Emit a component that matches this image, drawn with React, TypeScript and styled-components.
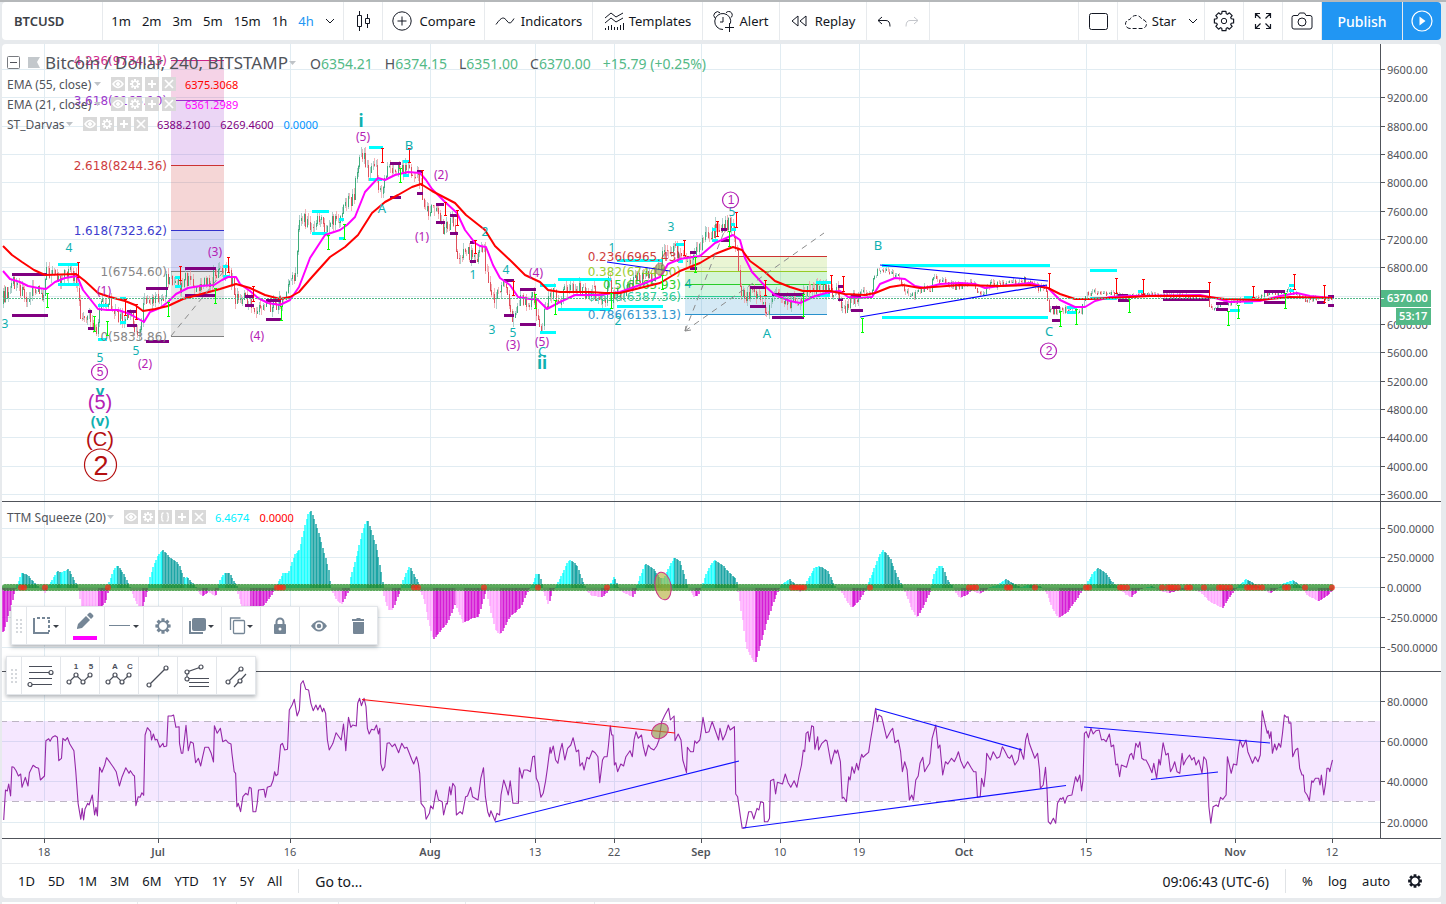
import React from "react";
import styled, { createGlobalStyle } from "styled-components";

type Pt = [number, number];

/* ---------- helpers ---------- */

// Parses "x,y x,y ..." into points.
const parse = (s: string): Pt[] =>
  s.trim().split(/\s+/).map((p) => p.split(",").map(Number) as Pt);

const toPoints = (pts: Pt[]) => pts.map((p) => p.join(",")).join(" ");

const sampler = (pts: Pt[]) => (x: number) => {
  let i = 1;
  while (i < pts.length - 1 && pts[i][0] < x) i++;
  const [x0, y0] = pts[i - 1];
  const [x1, y1] = pts[i];
  const t = Math.max(0, Math.min(1, (x - x0) / (x1 - x0)));
  return y0 + (y1 - y0) * t;
};

const noise = (n: number) => {
  const v = Math.sin(n * 12.9898 + 4.1414) * 43758.5453;
  return v - Math.floor(v);
};

const BAR = 1.463;

/* ---------- data ---------- */

const TIMES: [number, string][] = [
  [44, "18"], [158, "Jul"], [290, "16"], [430, "Aug"], [535, "13"], [614, "22"],
  [701, "Sep"], [780, "10"], [859, "19"], [964, "Oct"], [1086, "15"], [1235, "Nov"], [1332, "12"],
];

const PRICES: [number, string][] = Array.from({ length: 16 }, (_, i) => [
  Math.round(69 + i * 28.33),
  (9600 - i * 400).toFixed(2),
]);

const SQUEEZE_LEVELS: [number, string][] = [
  [528, "500.0000"], [557, "250.0000"], [587, "0.0000"], [617, "-250.0000"], [647, "-500.0000"],
];
const RSI_LEVELS: [number, string][] = [
  [701, "80.0000"], [741, "60.0000"], [781, "40.0000"], [822, "20.0000"],
];

const price = parse(`3,303 5,295 10,291 12,280 22,290 28,295 38,290 45,296 47,272 55,274 62,280 66,270 76,276 79,290 81,310 84,320
90,312 94,325 99,338 100,310 107,300 115,306 120,316 124,318 132,310 135,330 142,333 146,298 152,300 158,296 166,301 168,280
178,278 182,288 187,278 195,285 205,284 214,280 216,272 228,272 234,280 236,300 245,299 251,301 254,314 262,305 272,308 280,303
288,299 290,280 297,273 300,235 303,218 312,224 320,218 328,230 334,222 343,222 346,202 356,200 358,170 364,152 370,172 378,164
380,188 384,190 388,168 400,168 412,170 421,175 424,200 432,212 438,208 444,228 452,222 456,220 458,255 470,252 478,260 484,245
486,250 488,275 494,300 500,292 505,285 510,300 513,318 517,316 522,298 530,302 536,296 541,330 545,318 549,300 554,290 560,302
566,292 575,285 585,292 595,290 600,300 608,298 611,268 613,296 628,292 636,278 645,275 656,276 662,270 664,258 672,247 680,252
686,262 695,255 702,245 704,235 712,232 722,228 730,224 735,228 737,250 740,258 742,295 748,298 755,290 764,298 768,314 775,295
785,303 795,300 803,303 806,290 820,288 838,290 842,300 845,308 852,300 862,292 872,295 876,275 880,270 890,272 900,276 906,290
912,298 920,290 932,288 934,274 942,280 955,286 975,283 982,295 992,284 1005,284 1025,280 1040,287 1048,288 1050,310 1060,310
1075,309 1083,311 1086,295 1095,292 1115,293 1125,298 1140,294 1160,295 1200,297 1210,300 1213,308 1225,303 1240,301 1262,298
1265,293 1280,293 1290,290 1300,295 1308,300 1320,298 1332,299`);

const ema21 = parse(`3,271 10,279 20,282 28,286 38,288 46,289 55,282 65,278 77,276 83,290 98,309 107,310 118,310 130,314 135,317
144,322 150,312 160,308 168,302 176,294 188,288 200,286 214,285 222,280 228,277 236,277 240,284 250,291 258,298 268,303 280,305
290,300 299,287 310,258 325,235 340,230 347,225 355,217 365,192 378,178 385,180 395,175 408,172 420,173 426,180 432,189 444,201
457,213 465,230 475,243 480,246 486,247 493,265 500,278 510,285 518,297 530,299 537,299 547,309 560,302 575,295 600,295 620,292
640,285 660,277 668,264 680,259 700,256 715,243 733,235 740,240 745,258 752,272 765,286 775,295 790,301 800,303 815,296 830,292
840,291 848,297 860,298 872,297 880,284 895,278 905,279 915,286 925,288 940,284 960,283 975,284 985,288 1000,286 1030,283
1048,288 1060,300 1075,307 1085,307 1095,301 1110,297 1130,296 1200,295 1215,298 1230,302 1260,301 1280,296 1297,293 1310,296 1332,298`);

const ema55 = parse(`3,246 12,255 22,262 34,270 45,275 76,274 85,281 98,293 110,297 125,301 135,305 143,311 155,309 168,306 183,299
205,293 220,289 236,284 250,288 265,295 280,299 290,297 299,292 312,277 330,257 345,247 358,235 372,213 385,202 398,195 412,187
421,184 432,191 455,203 466,215 485,230 495,246 512,262 525,275 540,282 548,290 560,292 590,292 605,293 620,293 640,288 660,283
680,271 700,263 715,254 733,247 742,250 750,261 765,272 775,281 790,287 803,291 830,291 845,294 865,295 875,293 890,287 903,285
920,288 960,285 1000,286 1030,285 1048,288 1060,294 1075,299 1090,299 1110,298 1150,296 1200,296 1225,299 1260,300 1290,297 1332,298`);

const squeeze = parse(`2,-44 4,-43 15,-1 17,4 21,15 27,13 38,1 40,-1 45,-5 48,2 57,17.5 60,15 68,19 77,2 78,-3 81,-18 90,-25 98,-26
107,-10 108,4 113,18 117,23 124,13 129,2 132,-6 137,-17 142,-21 147,-3 149,8 153,22 158,34 163,38 168,32 178,24 184,10 187,11
195,1 198,-4 202,-8 208,-4 215,-9 217,-2 219,6 224,15.5 229,15 236,2 237,-4 241,-18 250,-22 262,-20 275,-1 277,4 283,15 288,15
294,33 299,38 304,60 308,75 311,77 320,49 328,20 331,-2 336,-12 342,-16 349,-2 350,10 357,35 363,59 367,69 376,41 382,10 384,-10
388,-22 392,-22 400,-2 403,8 409,22 418,5 420,-3 424,-12 428,-33 433,-52 440,-43 447,-35 455,-15 463,-35 472,-30 478,-29 486,-2
490,-22 495,-42 500,-47 510,-28 520,-20 528,-2 532,3 536,14 539,14 542,3 543,-3 548,-17 552,-3 557,4 562,14 567,26 570,28
577,22 584,3 587,-4 592,-8 602,-9 608,-3 610,4 614,12 619,-2 626,-6 633,-9 637,3 640,12 645,25 653,19 660,10 664,10 668,20
674,31 680,26 687,3 690,-4 694,-9 698,-7 702,3 706,15 712,26 715,28 722,23 730,14 736,9 738,-5 742,-30 746,-60 751,-70 755,-76
759,-61 766,-35 773,-14 780,2 784,6 789,9 796,2 799,-4 804,-1 807,8 814,20 819,22 827,17 835,1 841,-3 846,-13 851,-20 858,-14
865,-2 868,6 875,22 880,35 883,38 890,29 897,12 902,2 905,-5 911,-20 917,-30 924,-16 930,-3 933,12 938,22 942,22 947,8 952,2
955,-4 960,-10 966,-7 972,-2 976,-5 980,-6 990,1 998,3 1005,9 1012,5 1020,1 1028,3 1040,2 1046,-5 1052,-20 1058,-30 1066,-25
1074,-15 1082,-2 1086,4 1092,14 1097,20 1104,16 1111,7 1118,0 1126,-7 1131,-9 1140,-1 1152,2 1160,-3 1168,-5 1180,-2 1190,-1
1200,-4 1210,-14 1222,-20 1230,-8 1238,3 1246,9 1254,4 1265,-3 1270,-5 1276,-1 1284,5 1293,8 1302,0 1308,-8 1318,-13 1326,-8 1332,-3`);

const rsiSummer = parse(`8,480 12,390 16,393 19,372 23,408 26,320 30,322 35,332 40,348 45,342 48,382 55,352 61,378 64,338 72,316 78,322
84,325 88,360 97,348 100,242 106,236 109,244 114,232 120,227 125,232 128,302 134,295 137,235 142,242 147,233 152,252 161,272
165,335 170,430 176,478 179,445 182,480 185,447 191,430 194,435 201,405 206,465 209,442 212,468 217,322 222,337 228,315 232,293
240,308 247,322 253,335 260,378 266,350 274,323 281,340 284,332 290,345 293,348 296,437 301,410 305,412 309,398 313,406 316,225
321,203 328,215 330,240 334,222 338,240 342,238 348,262 355,250 357,260 363,258 366,168 373,168 378,165 383,202 390,200 391,250
395,280 398,280 405,196 410,272 415,245 421,250 426,308 432,295 437,318 441,292 446,262 454,262 460,280 465,306 467,197 473,220
480,205 485,245 492,240 497,248 503,252 505,280 510,335 513,340 516,440 519,430 524,455 529,410 535,400 540,405 543,382 547,385
551,455 557,455 560,430 563,390 575,388 578,412 582,382 590,378 595,360 598,335 601,347 605,343 608,300 611,255 615,250 620,270
626,268 630,150 636,135 641,118 647,168 652,150 655,72 660,62 666,88 672,90 677,130 682,152 688,135 692,150 697,135 702,155
705,145 709,160 713,240 717,270 723,255 725,250 732,218 738,230 743,240 748,192 751,238 753,272 756,215 759,172 764,202 768,195
776,198 779,130 783,115 787,137 793,115 797,140 800,205 804,222 809,208 815,210 820,195 824,222 827,205 829,310 833,332 838,320
843,250 848,248 854,260 860,252 868,278 875,250 881,265 886,262 892,282 897,300 901,312 907,290 911,310 914,340 917,430 921,437
925,445 928,478 935,460 938,437 943,447 950,390 955,420 963,425 966,465 972,430 974,432 979,380 982,405 986,370 991,380 994,465
1002,455 1007,462 1014,410 1018,408 1025,382 1029,410 1041,420 1047,355 1053,323 1057,410 1062,455 1066,470 1069,452 1078,482
1082,460 1088,465 1091,405 1097,360 1103,385 1107,405 1111,362 1117,430 1129,430 1131,323 1137,355 1141,330 1148,330 1155,335
1160,290 1164,288 1168,355 1173,370 1178,412 1183,400 1188,365 1192,325 1198,262 1200,280 1205,258 1210,300 1215,310 1220,272
1224,250 1230,300 1236,265 1243,255 1248,233 1255,275 1260,270 1263,318 1268,308 1272,330 1278,292 1283,297 1290,272 1296,278
1302,290 1306,368 1312,300 1316,290 1322,290 1325,258 1329,197 1332,225 1335,225 1338,315 1341,308 1345,335 1352,312 1358,318
1363,290 1372,272 1377,290 1381,238 1385,215 1390,235 1397,225 1401,260 1406,288 1412,255 1417,265 1424,270 1430,258 1435,240
1441,185 1448,165 1456,145 1460,180 1468,168 1470,242 1477,222 1483,240 1487,300 1495,338 1497,262 1504,275 1510,275 1513,242
1517,250 1524,240 1527,215 1531,172 1537,218 1544,215 1551,185 1556,205 1565,240`).map(
  ([u, v]) => [Math.round(u * 4.592) / 10, Math.round(6600 + v * 3.333) / 10] as Pt
);

const rsiAutumn = parse(`0,205 6,240 12,222 18,195 22,210 31,200 34,402 38,410 44,470 48,505 55,503 62,455 68,455 73,477 80,445 84,450
88,425 94,428 96,485 103,485 107,475 109,362 116,358 120,402 124,367 135,372 141,342 147,368 153,382 160,362 166,382 171,345
176,315 180,270 183,275 186,220 190,215 193,245 198,197 202,200 205,268 211,230 213,270 220,250 228,240 231,243 240,312 248,270
251,280 254,270 260,305 264,415 267,412 273,425 278,350 281,360 285,320 290,340 295,310 299,330 303,300 306,283 309,292 314,285
321,277 325,240 330,200 336,145 340,185 343,165 349,170 355,205 360,235 369,212 373,205 378,248 385,240 390,275 394,335 399,305
404,330 409,420 414,405 418,420 423,360 428,348 432,310 438,292 442,335 448,320 453,310 458,235 466,195 471,265 475,255 481,345
487,305 492,312 500,295 506,305 511,290 515,275 520,303 527,325 535,305 542,322 548,335 553,335 556,412 562,410 565,355 570,380
574,330 576,280 584,300 590,275 598,295 604,290 610,260 614,270 622,292 626,295 630,285 637,315 644,300 648,265 656,298 660,240
664,220 668,250 672,265 680,295 686,280 690,330 692,385 698,375 703,322 706,380 709,485 714,492 718,480 720,475 725,490 729,430
735,415 738,418 741,412 745,430 749,412 752,407 760,405 765,370 768,350 772,365 777,345 781,393 784,360 787,220 791,215 796,233
801,205 806,222 812,212 819,210 824,240 829,238 834,245 841,222 845,260 850,255 855,315 859,312 863,350 867,315 878,322 885,285
889,280 893,298 898,250 903,262 907,245 911,295 916,300 920,300 926,315 933,338 937,310 943,355 948,298 951,315 957,248 963,285
968,280 973,335 978,322 982,305 987,335 993,340 998,280 1001,315 1006,300 1014,285 1019,300 1024,292 1028,315 1034,300 1041,340
1045,290 1050,300 1053,330 1056,440 1060,490 1065,440 1072,435 1076,440 1081,412 1086,418 1093,405 1096,290 1104,340 1109,312
1116,315 1120,265 1123,240 1129,262 1136,240 1140,275 1150,310 1156,290 1162,305 1167,285 1171,152 1176,185 1182,220 1184,212
1187,235 1190,215 1193,280 1198,252 1202,270 1207,250 1211,262 1215,220 1219,165 1224,172 1227,170 1229,190 1233,188 1237,290
1243,270 1248,265 1252,325 1257,345 1260,345 1263,395 1268,405 1273,422 1278,362 1281,367 1286,355 1293,355 1296,375 1299,345
1304,405 1308,370 1311,325 1315,325 1317,335 1320,315 1323,300`).map(
  ([u, v]) => [Math.round(7200 + u * 4.63) / 10, Math.round(6600 + v * 3.333) / 10] as Pt
);

type Seg = [number, number, number];
const segs = (s: string): Seg[] =>
  s.trim().split(/\s+/).map((p) => p.split(",").map(Number) as Seg);

const purpleBoxes = segs(`12,47,274 12,48,315 88,92,311 88,94,328 127,136,311 127,137,325 146,168,288 146,169,341 185,216,268
185,216,295 245,254,296 245,254,305 266,281,300 266,281,319 390,401,163 390,401,197 417,423,171 417,423,193 436,444,204
436,445,222 450,457,215 450,458,233 470,476,242 470,476,261 504,514,280 504,514,315 520,536,289 520,536,324 690,696,252
690,697,268 721,727,229 721,729,240 750,766,287 750,766,306 772,804,294 772,804,317 838,843,286 838,843,299 851,861,296
851,863,310 1052,1060,307 1052,1060,320 1118,1128,295 1118,1129,300 1163,1209,291 1163,1209,299 1216,1228,303 1216,1228,309
1264,1285,291 1264,1285,302 1317,1325,302 1328,1334,296 1328,1334,305`);

const cyanBoxes = segs(`58,78,264 58,79,284 98,108,305 98,107,339 120,126,298 120,126,322 175,181,277 175,181,286 223,228,266
223,230,276 312,329,211 312,327,233 339,344,219 339,344,238 369,383,147 369,382,179 403,409,161 403,409,175 540,556,285
540,556,332 558,611,279 558,611,309 617,662,260 617,663,306 676,684,244 678,683,261 712,716,229 712,718,240 731,735,224
731,736,229 816,831,282 820,830,295 882,1050,265 882,1048,317 1067,1077,307 1067,1076,312 1090,1117,270 1090,1117,298
1138,1143,291 1230,1240,310 1244,1253,297 1244,1253,302 1289,1294,285 1289,1294,290`);

const sellTicks = segs(`78,262,278 125,299,316 136,304,320 180,266,281 228,257,273 253,286,302 382,148,163 409,148,163 422,170,186
445,202,216 457,210,226 475,240,254 513,281,296 684,240,256 717,221,237 736,212,228 765,280,296 831,275,292 843,276,292
1049,273,289 1116,278,294 1143,279,295 1209,282,297 1253,286,298 1294,274,290 1324,285,303`);

const buyTicks = segs(`47,293,308 94,316,332 107,321,336 168,302,317 215,288,304 281,306,321 328,235,250 344,224,240 400,168,183
535,294,309 555,300,315 611,293,309 662,275,290 695,257,273 729,231,247 803,294,317 862,318,333 1060,311,327 1076,309,325
1129,299,313 1228,311,326 1238,305,319 1285,293,309`);

const sticks = (list: Seg[]) =>
  list.map(([x, a, b]) => `M${x + 0.5} ${a}V${b}M${x - 1} ${a + 0.5}h3M${x - 1} ${b - 0.5}h3`).join("");
const bars = (list: Seg[]) => list.map(([a, b, y]) => `M${a} ${y + 0.5}H${b}`).join("");

type Mark = [number, number, string, string, number?, boolean?];
const TEAL = "#0fb0b0";
const PLUM = "#b420b4";
const marks: Mark[] = [
  [5, 328, "3", TEAL], [69, 252, "4", TEAL], [104, 295, "(1)", PLUM], [100, 362, "5", TEAL],
  [136, 355, "5", TEAL], [145, 368, "(2)", PLUM], [215, 256, "(3)", PLUM], [257, 340, "(4)", PLUM],
  [361, 127, "i", TEAL, 17, true], [363, 141, "(5)", PLUM], [382, 213, "A", TEAL], [409, 150, "B", TEAL],
  [441, 179, "(2)", PLUM], [422, 241, "(1)", PLUM], [485, 236, "2", TEAL], [473, 279, "1", TEAL],
  [506, 274, "4", TEAL], [536, 277, "(4)", PLUM], [492, 334, "3", TEAL], [513, 337, "5", TEAL],
  [513, 349, "(3)", PLUM], [542, 346, "(5)", PLUM], [542, 356, "C", TEAL], [542, 369, "ii", TEAL, 17, true],
  [612, 252, "1", TEAL], [618, 325, "2", TEAL], [671, 231, "3", TEAL], [688, 288, "4", TEAL],
  [732, 216, "5", TEAL], [767, 338, "A", TEAL], [878, 250, "B", TEAL], [1049, 336, "C", TEAL],
  [100, 396, "v", TEAL, 15, true], [100, 409, "(5)", PLUM, 20], [100, 426, "(v)", TEAL, 15, true],
  [100, 446, "(C)", "#b41010", 20],
];

const circled: [number, number, string, string, number, number][] = [
  [99, 372, "5", PLUM, 8, 12], [730, 200, "1", PLUM, 8, 12],
  [1048, 351, "2", PLUM, 8, 12], [100, 465, "2", "#b41010", 16, 27],
];

const leftFib: [number, string, string, string][] = [
  [60, "4.236(9734.13)", "#cc2288", "#cc2288"], [100, "3.618(9165.10)", "#9930cc", "#9930cc"],
  [165, "2.618(8244.36)", "#cc3333", "#cc3333"], [230, "1.618(7323.62)", "#3333cc", "#3333cc"],
  [271, "1(6754.60)", "#808080", "#808080"], [336, "0(5833.86)", "#808080", "none"],
];
const rightFib: [number, string, string, string][] = [
  [256, "0.236(6965.43)", "#cc3333", "#95cc28"], [271, "0.382(6744.60)", "#95cc28", "#28cc28"],
  [284, "0.5(6565.93)", "#28cc28", "#28cc70"], [296, "0.618(6387.36)", "#28cc95", "#2890cc"],
  [314, "0.786(6133.13)", "#2890cc", "none"],
];

/* ---------- derived shapes ---------- */

const candles = (() => {
  const at = sampler(price);
  const out = { upWick: "", downWick: "", up: "", down: "" };
  let open = at(3);
  for (let i = 0; 3 + i * BAR < 1333; i++) {
    const x = 3 + i * BAR;
    const amp = x > 1090 ? 4 : x > 860 ? 6 : 13;
    const close = at(x + BAR) + (noise(i) - 0.5) * amp;
    const hi = Math.min(open, close) - noise(i + 2000) * amp * 0.5;
    const lo = Math.max(open, close) + noise(i + 4000) * amp * 0.5;
    const px = Math.floor(x) + 0.5;
    const top = Math.min(open, close).toFixed(0);
    const bottom = (Math.max(open, close) + 1).toFixed(0);
    const k = close < open ? "up" : "down";
    out[`${k}Wick` as "upWick" | "downWick"] += `M${px} ${hi.toFixed(0)}V${lo.toFixed(0)}`;
    if (i % 2 === 0 || Math.abs(open - close) > 5) out[k] += `M${px} ${top}V${bottom}`;
    open = close;
  }
  return out;
})();

const histogram = (() => {
  const at = sampler(squeeze);
  const out: { x: number; h: number; fill: string }[] = [];
  for (let i = 0; 2 + i * BAR < 1333; i++) {
    const x = 2 + i * BAR;
    const h = at(x);
    const growing = Math.abs(at(x + 0.7)) >= Math.abs(at(x - 0.7)) - 0.1;
    const fill = h > 0 ? (growing ? "#00ffff" : "#009a9a") : growing ? "#ff9cff" : "#d000d0";
    out.push({ x: Math.floor(x), h: Math.round(h), fill });
  }
  return out;
})();

const redDots = [21, 24, 45, 108, 277, 280, 283, 414, 418, 484, 538, 607, 792, 795, 798, 801, 804, 870, 969, 973, 976,
  1007, 1010, 1035, 1086, 1089, 1120, 1123, 1127, 1162, 1168, 1171, 1174, 1178, 1187, 1190, 1204, 1219, 1222, 1226, 1230,
  1247, 1250, 1254, 1258, 1262, 1285, 1288, 1305, 1332];

/* ---------- styled parts ---------- */

const UI = `"Noto Sans", "Open Sans", sans-serif`;

const Global = createGlobalStyle`
  *, *::before, *::after { box-sizing: border-box; }
  body { margin: 0; background: #e7eaed; font-family: ${UI}; color: #131722; overflow: hidden; }
  button { font: inherit; color: inherit; background: none; border: 0; padding: 0; cursor: pointer; }
  svg { display: block; }
`;

const Page = styled.div`
  display: flex;
  flex-direction: column;
  gap: 4px;
  padding: 0 5px 0 2px;
  border-top: 2px solid #b5b8ba;
`;

const Toolbar = styled.header`
  display: flex;
  height: 38px;
  background: #e7eaed;
  gap: 1px;
  border-radius: 4px;
  overflow: hidden;
  font-size: 13px;
`;

const Cell = styled.div<{ $w: number; $gap?: number }>`
  width: ${(p) => p.$w}px;
  flex: none;
  display: flex;
  align-items: center;
  justify-content: center;
  gap: ${(p) => p.$gap ?? 0}px;
  background: #fff;
`;

const ToolButton = styled.button<{ $w: number; $gap?: number; $primary?: boolean }>`
  width: ${(p) => p.$w}px;
  flex: none;
  display: flex;
  align-items: center;
  justify-content: center;
  gap: ${(p) => p.$gap ?? 8}px;
  white-space: nowrap;
  background: ${(p) => (p.$primary ? "#2196f3" : "#fff")};
  color: ${(p) => (p.$primary ? "#fff" : "#131722")};
  font-size: ${(p) => (p.$primary ? 14 : 13)}px;
  font-weight: ${(p) => (p.$primary ? 500 : 400)};
`;

const LayoutName = styled.span`
  margin-right: 8px;
`;

const Symbol = styled.button`
  width: 100px;
  flex: none;
  padding-left: 12px;
  background: #fff;
  text-align: left;
  font-size: 13px;
  font-weight: 600;
  color: #3c4046;
`;

const Interval = styled.button<{ $active?: boolean }>`
  color: ${(p) => (p.$active ? "#2196f3" : "#131722")};
`;

const Spacer = styled.div`
  flex: 1;
  background: #fff;
`;

const ChartCard = styled.main`
  position: relative;
  background: #fff;
  border-radius: 4px;
`;

const Pane = styled.section<{ $h: number }>`
  display: flex;
  height: ${(p) => p.$h}px;
  border-bottom: 1px solid #50535a;
`;

const Plot = styled.svg`
  flex: 1;
  min-width: 0;
  height: 100%;
  overflow: hidden;
`;

const Scale = styled.svg`
  width: 61px;
  flex: none;
  height: 100%;
  border-left: 1px solid #50535a;
  font: 11px ${UI};
  fill: #50535a;
`;

const TimeAxis = styled.svg`
  width: 100%;
  height: 24px;
  font: 11px ${UI};
  fill: #50535a;
`;

const BottomBar = styled.footer`
  display: flex;
  align-items: center;
  height: 35px;
  padding: 0 16px;
  border-top: 1px solid #e7eaed;
  font-size: 13px;
`;

const Ranges = styled.nav`
  display: flex;
  gap: 13px;
  padding-right: 16px;
`;

const BarGroup = styled.div`
  display: flex;
  align-items: center;
  gap: 15px;
  height: 24px;
  padding: 0 0 0 16px;
  border-left: 1px solid #e0e3e6;
`;

const GoTo = styled.button`
  font-size: 14px;
`;

const Clock = styled.button`
  margin-left: auto;
  margin-right: 16px;
  font-size: 14px;
`;

const TabStrip = styled.div`
  display: flex;
  gap: 1px;
  height: 2px;
`;

const TabStub = styled.div<{ $w?: number }>`
  background: #fff;
  ${(p) => (p.$w ? `width: ${p.$w}px; flex: none;` : "flex: 1;")}
`;

const Legend = styled.div<{ $top: number }>`
  position: absolute;
  left: 5px;
  top: ${(p) => p.$top}px;
  display: flex;
  flex-direction: column;
  font-size: 12px;
  color: #50535a;
`;

const LegendTitle = styled.div`
  display: flex;
  align-items: center;
  height: 22px;
  margin-top: 4px;
  white-space: nowrap;
`;

const TitleText = styled.h1`
  margin: 0 4px 0 3px;
  width: 240px;
  font-size: 17px;
  line-height: 22px;
  font-weight: 400;
`;

const Ohlc = styled.dl`
  display: flex;
  gap: 12px;
  margin: 0 0 0 14px;
  font-size: 14px;
  div { display: flex; }
  dd { margin: 0; color: #53b987; }
`;

const LegendRow = styled.div`
  display: flex;
  align-items: center;
  height: 20px;
  white-space: nowrap;
`;

const RowName = styled.span<{ $w: number }>`
  width: ${(p) => p.$w}px;
`;

const MiniButtons = styled.div`
  display: flex;
  gap: 3px;
  margin: 0 9px 0 10px;
`;

const MiniButton = styled.button`
  width: 14px;
  height: 14px;
  background: #d9d9d9;
`;

const Value = styled.span<{ $c: string }>`
  margin-right: 10px;
  font-size: 11px;
  color: ${(p) => p.$c};
`;

const FloatBar = styled.div<{ $x: number; $y: number }>`
  position: absolute;
  left: ${(p) => p.$x}px;
  top: ${(p) => p.$y}px;
  display: flex;
  height: 39px;
  background: #fff;
  border: 1px solid #e3e6ea;
  box-shadow: 0 2px 4px rgba(60, 70, 80, 0.4);
`;

const Grip = styled.div`
  width: 14px;
  display: flex;
  align-items: center;
  justify-content: center;
`;

const FloatButton = styled.button`
  width: 39px;
  display: flex;
  align-items: center;
  justify-content: center;
  border-left: 1px solid #e3e6ea;
`;

/* ---------- small drawings ---------- */

const Ico = ({ w = 28, h = 28, children }: { w?: number; h?: number; children: React.ReactNode }) => (
  <svg width={w} height={h} viewBox={`0 0 ${w} ${h}`} fill="none" stroke="currentColor" aria-hidden="true">
    {children}
  </svg>
);

const Chevron = () => (
  <Ico w={10} h={6}><path d="M1 1l4 4 4-4" /></Ico>
);
const Caret = () => (
  <svg width="7" height="4" aria-hidden="true"><path d="M0 0h7L3.500 4z" fill="#bfc3c7" /></svg>
);

const gearPath = (cx: number, cy: number, r1: number, r2: number) => {
  let d = "";
  for (let i = 0; i < 8; i++) {
    [[-0.3, r1], [-0.2, r2], [0.2, r2], [0.3, r1]].forEach(([o, r], j) => {
      const a = (i * Math.PI) / 4 + o;
      d += `${i + j === 0 ? "M" : "L"}${(cx + Math.sin(a) * r).toFixed(2)} ${(cy - Math.cos(a) * r).toFixed(2)}`;
    });
  }
  return d + "Z";
};

const miniGlyphs: Record<string, React.ReactNode> = {
  Hide: (
    <g fill="none" stroke="#fff"><path d="M2 7q5-7 10 0q-5 7-10 0z" strokeWidth="1.500" /><circle cx="7" cy="7" r="1.500" fill="#fff" /></g>
  ),
  Settings: <path d={gearPath(7, 7, 3.5, 5.2) + "M7 5a2 2 0 1 0 .01 0z"} fill="#fff" fillRule="evenodd" />,
  Source: <path d="M5.500 3q-2 0-1.500 2.500q0 1.500-1 1.500q1 0 1 1.500q-.5 2.500 1.500 2.500M8.500 3q2 0 1.500 2.500q0 1.500 1 1.500q-1 0-1 1.500q.5 2.500-1.500 2.500" fill="none" stroke="#fff" strokeWidth="1.300" />,
  Add: <path d="M7 3v8M3 7h8" stroke="#fff" strokeWidth="2" />,
  Remove: <path d="M3 3l8 8M11 3l-8 8" stroke="#fff" strokeWidth="1.700" />,
};

const Minis = ({ source }: { source?: boolean }) => (
  <MiniButtons>
    {["Hide", "Settings", ...(source ? ["Source"] : []), "Add", "Remove"].map((n) => (
      <MiniButton key={n} aria-label={n}>
        <svg width="14" height="14" aria-hidden="true">{miniGlyphs[n]}</svg>
      </MiniButton>
    ))}
  </MiniButtons>
);

const GripDots = () => (
  <svg width="6" height="14" fill="#d5d8dc" aria-hidden="true">
    {[0, 4, 8, 12].map((y) => (
      <g key={y}><rect y={y} width="2" height="2" /><rect x="4" y={y} width="2" height="2" /></g>
    ))}
  </svg>
);

const Drop = ({ x = 25, y = 14 }) => <path d={`M${x} ${y - 1}h6l-3 3z`} fill="#3a3f47" stroke="none" />;

const SLATE = "#758696";
const editTools: [string, React.ReactNode][] = [
  ["Border", <g><path d="M4 6v15h15" stroke={SLATE} strokeWidth="2" /><path d="M7 6h13M19 8v12" stroke={SLATE} strokeWidth="2" strokeDasharray="3 2" /><Drop x={23} /></g>],
  ["Line colour", <g stroke="none"><path d="M8 16l1-4 8-8 4 4-8 8-5 1z" fill={SLATE} /><path d="M18 3l2-2q1-1 2 0l2 2q1 1 0 2l-2 2z" fill={SLATE} /><rect x="4" y="24" width="24" height="4" fill="#ff00ff" /></g>],
  ["Line style", <g><path d="M1 13.500h21" stroke={SLATE} /><Drop /></g>],
  ["Settings", <path d={gearPath(16, 14, 5.6, 7.8) + "M16 10a4 4 0 1 0 .01 0z"} fill={SLATE} fillRule="evenodd" stroke="none" />],
  ["Visual order", <g><path d="M4 9v12H17" stroke={SLATE} strokeWidth="2" /><rect x="6" y="6" width="14" height="13" rx="2" fill={SLATE} stroke="none" /><Drop x={22} /></g>],
  ["Clone", <g><path d="M5.500 18v-12h10" stroke={SLATE} strokeWidth="1.300" /><rect x="8.500" y="8.500" width="11" height="13" rx="1" stroke={SLATE} strokeWidth="1.300" /><Drop x={22} /></g>],
  ["Lock", <g><path d="M12.500 13v-3a3.500 3.500 0 0 1 7 0v3" stroke={SLATE} strokeWidth="2" /><rect x="10" y="12" width="12" height="10" rx="1" fill={SLATE} stroke="none" /><circle cx="16" cy="17" r="1.500" fill="#fff" stroke="none" /></g>],
  ["Visibility", <g><path d="M8 14q8-11 16 0q-8 11-16 0z" fill={SLATE} stroke="none" /><circle cx="16" cy="14" r="3" stroke="#fff" strokeWidth="1.500" /></g>],
  ["Delete", <g fill={SLATE} stroke="none"><path d="M10 7h4l1-1h3l1 1h3v2H10zM11 10h11v11q0 1-1 1h-9q-1 0-1-1z" /></g>],
];

const INK = "#4a4e59";
const Nodes = ({ at }: { at: Pt[] }) => (
  <>{at.map(([x, y]) => <circle key={`${x}-${y}`} cx={x} cy={y} r="2" fill="#fff" />)}</>
);
const Wave = ({ a, b }: { a: string; b: string }) => (
  <g stroke={INK} strokeWidth="1.200">
    <path d="M5 20l7-7 7 7 7-7" /><Nodes at={[[5, 20], [12, 13], [19, 20], [26, 13]]} />
    <g fill={INK} stroke="none" fontSize="8" fontWeight="700" fontFamily="Liberation Sans, sans-serif" textAnchor="middle">
      <text x="12" y="7">{a}</text><text x="27" y="7">{b}</text>
    </g>
  </g>
);
const drawTools: [string, React.ReactNode][] = [
  ["Fib retracement", <g stroke={INK} strokeWidth="1.200"><path d="M4 4.500h23M4 10.500h23M4 16.500h23M4 22.500h23" /><Nodes at={[[26, 10.5], [5, 22.5]]} /></g>],
  ["Elliott impulse", <Wave a="1" b="5" />],
  ["Elliott correction", <Wave a="A" b="C" />],
  ["Trend line", <g stroke={INK} strokeWidth="1.200"><path d="M7 23L24 6" /><Nodes at={[[7, 23], [24, 6]]} /></g>],
  ["Fib extension", <g stroke={INK} strokeWidth="1.200"><path d="M6 17v-7L20 5M6 16.500h22M8 20.500h20M8 24.500h20" /><Nodes at={[[6, 17], [6, 10], [20, 5]]} /></g>],
  ["Parallel channel", <g stroke={INK} strokeWidth="1.200"><path d="M8 20L21 7M14 25l12-13" /><Nodes at={[[8, 20], [21, 7], [20, 19]]} /></g>],
];

/* ---------- chart panes ---------- */

const Grid = ({ rows, bottom }: { rows: [number, string][]; bottom: number }) => (
  <g stroke="#e1ecf2" shapeRendering="crispEdges">
    {rows.map(([y]) => <path key={y} d={`M0 ${y + 0.5}H4000`} />)}
    {TIMES.map(([x]) => <path key={x} d={`M${x + 0.5} 0V${bottom}`} />)}
  </g>
);

const ScaleLabels = ({ rows, top }: { rows: [number, string][]; top: number }) => (
  <g transform={`translate(0 ${-top})`}>
    {rows.map(([y, t]) => (
      <g key={t}>
        <path d={`M0 ${y + 0.5}h4`} stroke="#50535a" />
        <text x="6" y={y + 5}>{t}</text>
      </g>
    ))}
  </g>
);

const FibZone = ({ rows, x1, x2 }: { rows: [number, string, string, string][]; x1: number; x2: number }) => (
  <g>
    {rows.map(([y, , line, fill], i) => (
      <g key={y}>
        {fill !== "none" && <rect x={x1} y={y} width={x2 - x1} height={rows[i + 1][0] - y} fill={fill} opacity="0.2" />}
        <path d={`M${x1} ${y + 0.5}H${x2}`} stroke={line} />
      </g>
    ))}
  </g>
);

const FibText = ({ rows, x }: { rows: [number, string, string, string][]; x: number }) => (
  <g fontFamily="DejaVu Sans, sans-serif" fontSize="12" textAnchor="end" opacity="0.95">
    {rows.map(([y, t, c]) => <text key={t} x={x} y={y + 5} fill={c}>{t}</text>)}
  </g>
);

const PricePane = () => (
  <Plot role="img" aria-label="Bitcoin price">
    <g transform="translate(-2 -44)">
      <Grid rows={PRICES} bottom={501} />
      <FibZone rows={leftFib} x1={171} x2={224} />
      <FibZone rows={rightFib} x1={685} x2={827} />
      <g fill="none" shapeRendering="crispEdges">
        <path d={candles.upWick} stroke="#9cc4c0" opacity="0.8" />
        <path d={candles.downWick} stroke="#f2a0a8" opacity="0.8" />
        <path d={candles.up} stroke="#3fae7c" />
        <path d={candles.down} stroke="#e0505c" />
      </g>
      <path d={bars(purpleBoxes)} stroke="#800080" strokeWidth="3" />
      <path d={bars(cyanBoxes)} stroke="#00ffff" strokeWidth="3" />
      <FibText rows={leftFib} x={167} />
      <FibText rows={rightFib} x={681} />
      <g fill="none" strokeLinejoin="round">
        <polyline points={toPoints(ema21)} stroke="#ff00ff" strokeWidth="2" />
        <polyline points={toPoints(ema55)} stroke="#ff0000" strokeWidth="2" />
      </g>
      <path d={sticks(sellTicks)} stroke="#ff0000" />
      <path d={sticks(buyTicks)} stroke="#00ff00" />
      <g stroke="#8c8c8c" strokeDasharray="6 5">
        <path d="M171 336L224 271M685 331L824 233M685 331L724 232" />
      </g>
      <path d="M685 331l1-5M685 331l6-1" stroke="#8c8c8c" />
      <path d="M0 298.500H4000" stroke="#53b987" strokeDasharray="2 1" />
      <path d="M607 262L670 271M880 265L1048 281M860 317L1047 285" stroke="#0000ff" strokeWidth="1.200" />
      <ellipse cx="660" cy="269" rx="5" ry="6" fill="#909a40" fillOpacity="0.6" stroke="#c04080" strokeOpacity="0.6" />
      <g textAnchor="middle" fontFamily="Noto Sans, Liberation Sans, sans-serif">
        {marks.map(([x, y, t, c, size = 12, bold], i) => (
          <text key={i} x={x} y={y} fill={c} fontSize={size === 12 && /^[A-C]$/.test(t) ? 13 : size} fontWeight={bold ? 700 : 400}
            fontFamily={size > 12 && !bold ? "Liberation Sans, sans-serif" : undefined}>{t}</text>
        ))}
        {circled.map(([x, y, t, c, r, size]) => (
          <g key={`${x}-${y}`}>
            <circle cx={x + 0.5} cy={y} r={r} fill="none" stroke={c} strokeWidth="1.200" />
            <text x={x + 1} y={y + Math.round(size * 0.36)} fill={c} fontSize={size} fontFamily="Liberation Sans, sans-serif">{t}</text>
          </g>
        ))}
      </g>
    </g>
  </Plot>
);

const SqueezePane = () => (
  <Plot role="img" aria-label="TTM Squeeze">
    <g transform="translate(-2 -502)">
      <Grid rows={SQUEEZE_LEVELS} bottom={671} />
      {histogram.map(({ x, h, fill }) => (
        <rect key={x} x={x} y={h > 0 ? 588 - h : 588} width="2" height={Math.abs(h)} fill={fill} opacity="0.66" />
      ))}
      <rect x="2" y="584" width="1332" height="7" rx="3" fill="#228b22" opacity="0.74" />
      <path d="M3 584.500H1332M3 590.500H1332" stroke="#fff" strokeDasharray="1 2" opacity="0.3" />
      {redDots.map((x) => <circle key={x} cx={x} cy="587.500" r="3" fill="#ff2a1a" opacity="0.7" />)}
      <ellipse cx="663" cy="586" rx="8" ry="14" transform="rotate(-10 663 586)" fill="#b0aa30" fillOpacity="0.6" stroke="#cc3388" />
    </g>
  </Plot>
);

const RsiPane = () => (
  <Plot role="img" aria-label="Relative strength index">
    <g transform="translate(-2 -672)">
      <Grid rows={RSI_LEVELS} bottom={838} />
      <rect x="0" y="721" width="4000" height="80" fill="#9915ff" opacity="0.1" />
      <path d="M0 721.500H4000M0 801.500H4000" stroke="#bdb5c4" strokeDasharray="7 5" />
      <polyline points={toPoints([...rsiSummer, ...rsiAutumn])} fill="none" stroke="#9528a8" strokeWidth="1.100" strokeLinejoin="round" />
      <path d="M362 699.500L675 733" stroke="#ff1010" strokeWidth="1.200" />
      <path d="M495 822L739 761M743 828L1066 785.500M876 709L1022 750M1084 727L1270 743M1151 779.500L1218 772" stroke="#1010ff" strokeWidth="1.200" />
      <ellipse cx="660" cy="731" rx="9" ry="7" transform="rotate(-35 660 731)" fill="#909a40" fillOpacity="0.6" stroke="#cc3388" />
    </g>
  </Plot>
);

/* ---------- page ---------- */

export default function App() {
  return (
    <>
      <Global />
      <Page>
        <Toolbar>
          <Symbol>BTCUSD</Symbol>
          <Cell $w={240} $gap={11}>
            {["1m", "2m", "3m", "5m", "15m", "1h", "4h"].map((t) => (
              <Interval key={t} $active={t === "4h"}>{t}</Interval>
            ))}
            <Interval aria-label="More intervals"><Chevron /></Interval>
          </Cell>
          <ToolButton $w={38} aria-label="Candles">
            <Ico w={16} h={20}><path d="M4.500 0v4M4.500 16v4M2.500 4.500h4v11h-4zM12.500 3v4M12.500 13v4M10.500 7.500h4v5h-4z" /></Ico>
          </ToolButton>
          <ToolButton $w={101}>
            <Ico w={20} h={20}><circle cx="10" cy="10" r="9.200" /><path d="M10 5.500v9M5.500 10h9" /></Ico>Compare
          </ToolButton>
          <ToolButton $w={107} $gap={6}>
            <Ico w={20} h={12}><path d="M1 9.500C7 1 9 2 12 6q3 5 7-2.500" /></Ico>Indicators
          </ToolButton>
          <ToolButton $w={109} $gap={5}>
            <Ico w={20} h={18}>
              <path d="M1 6l6-5 5 4 7-4M1 11l6-5 5 4 7-4" />
              <path d="M1.500 18v-2M4.500 18v-4M7.500 18v-5M10.500 18v-3M13.500 18v-3M16.500 18v-5M19.500 18v-7" />
            </Ico>Templates
          </ToolButton>
          <ToolButton $w={76} $gap={5}>
            <Ico w={21} h={21}>
              <path d="M10 18.500a8 8 0 1 1 7.500-6M2 7A3.500 3.500 0 1 1 7 1.800M17.500 7A3.500 3.500 0 1 0 13 1.800M10 6v5H7M16.500 12v9M12 16.500h9" />
            </Ico>Alert
          </ToolButton>
          <ToolButton $w={86}>
            <Ico w={16} h={12}><path d="M7 1v10L1 6zM15 1v10L9 6z" /></Ico>Replay
          </ToolButton>
          <Cell $w={62} $gap={14}>
            <Interval aria-label="Undo"><Ico w={14} h={11}><path d="M5 1L1 4.500 5 8M1 4.500h8q4 0 4 6" /></Ico></Interval>
            <Interval aria-label="Redo"><Ico w={14} h={11}><path d="M9 1l4 3.500L9 8M13 4.500H5q-4 0-4 6" stroke="#c4c6cb" /></Ico></Interval>
          </Cell>
          <Spacer />
          <ToolButton $w={38} aria-label="Layout">
            <Ico w={20} h={18}><rect x="1.500" y="1.500" width="18" height="16" rx="2" /></Ico>
          </ToolButton>
          <ToolButton $w={86} $gap={4}>
            <Ico w={24} h={18}><path d="M6 16.500a4.500 4.500 0 1 1 0-9a6.500 6.500 0 0 1 12 0a4.500 4.500 0 1 1 0 9z" strokeDasharray="4 2" /></Ico>
            <LayoutName>Star</LayoutName><Chevron />
          </ToolButton>
          <ToolButton $w={38} aria-label="Chart settings">
            <Ico w={22} h={22}><path d={gearPath(11, 11, 7.6, 9.8)} strokeWidth="1.200" strokeLinejoin="round" /><circle cx="11" cy="11" r="2.700" /></Ico>
          </ToolButton>
          <ToolButton $w={38} aria-label="Full screen">
            <Ico w={18} h={18}><path d="M1.500 6v-4.500H6M1.500 1.500l5 5M12 1.500h4.500V6M16.500 1.500l-5 5M1.500 12v4.500H6M1.500 16.500l5-5M16.500 12v4.500H12M16.500 16.500l-5-5" strokeWidth="1.200" /></Ico>
          </ToolButton>
          <ToolButton $w={38} aria-label="Snapshot">
            <Ico w={22} h={18}><path d="M3 3.500h4L8.500 1h5L15 3.500h4q2 0 2 2V15q0 2-2 2H3q-2 0-2-2V5.500q0-2 2-2z" /><circle cx="11" cy="10" r="4" /></Ico>
          </ToolButton>
          <ToolButton $w={80} $primary>Publish</ToolButton>
          <ToolButton $w={38} $primary aria-label="Play">
            <Ico w={22} h={22}><circle cx="11" cy="11" r="10" strokeWidth="1.200" /><path d="M8.500 6.500v9l6-4.500z" fill="#fff" stroke="none" /></Ico>
          </ToolButton>
        </Toolbar>

        <ChartCard>
          <Pane $h={458}>
            <PricePane />
            <Scale>
              <ScaleLabels rows={PRICES} top={44} />
              <g fill="#53b987"><rect y="246" width="50" height="17" /><rect x="15" y="264" width="35" height="17" /></g>
              <path d="M0 254.500h3" stroke="#fff" />
              <g fill="#fff" fontWeight="600"><text x="6" y="258">6370.00</text><text x="18" y="276">53:17</text></g>
            </Scale>
          </Pane>
          <Pane $h={170}>
            <SqueezePane />
            <Scale><ScaleLabels rows={SQUEEZE_LEVELS} top={502} /></Scale>
          </Pane>
          <Pane $h={167}>
            <RsiPane />
            <Scale><ScaleLabels rows={RSI_LEVELS} top={672} /></Scale>
          </Pane>
          <TimeAxis>
            {TIMES.map(([x, t]) => (
              <g key={x} textAnchor="middle">
                <path d={`M${x - 1.5} 0v4`} stroke="#50535a" />
                <text x={x - 2} y="17" fontWeight={/[A-Z]/.test(t) ? 600 : 400}>{t}</text>
              </g>
            ))}
          </TimeAxis>
          <BottomBar>
            <Ranges>
              {["1D", "5D", "1M", "3M", "6M", "YTD", "1Y", "5Y", "All"].map((t) => <button key={t}>{t}</button>)}
            </Ranges>
            <BarGroup><GoTo>Go to...</GoTo></BarGroup>
            <Clock>09:06:43 (UTC-6)</Clock>
            <BarGroup>
              <button>%</button><button>log</button><button>auto</button>
              <button aria-label="Scale settings">
                <svg width="20" height="16" aria-hidden="true"><path d={gearPath(10, 8, 5, 7) + "M10 4.500a3.500 3.500 0 1 0 .01 0z"} fill="#131722" fillRule="evenodd" /></svg>
              </button>
            </BarGroup>
          </BottomBar>

          <Legend $top={4}>
            <LegendTitle>
              <svg width="35" height="14" aria-hidden="true">
                <rect x="0.500" y="0.500" width="12" height="12" rx="1" fill="none" stroke="#787b80" />
                <path d="M3 6.500h7" stroke="#50535a" />
                <path d="M21 1h12l-3 5 3 6H21z" fill="#c3c8cc" />
              </svg>
              <TitleText>Bitcoin / Dollar, 240, BITSTAMP</TitleText>
              <Caret />
              <Ohlc>
                <div><dt>O</dt><dd>6354.21</dd></div>
                <div><dt>H</dt><dd>6374.15</dd></div>
                <div><dt>L</dt><dd>6351.00</dd></div>
                <div><dt>C</dt><dd>6370.00</dd></div>
                <div><dd>+15.79 (+0.25%)</dd></div>
              </Ohlc>
            </LegendTitle>
            <LegendRow><RowName $w={87}>EMA (55, close)</RowName><Caret /><Minis /><Value $c="#ff0000">6375.3068</Value></LegendRow>
            <LegendRow><RowName $w={87}>EMA (21, close)</RowName><Caret /><Minis /><Value $c="#ff00ff">6361.2989</Value></LegendRow>
            <LegendRow>
              <RowName $w={59}>ST_Darvas</RowName><Caret /><Minis />
              <Value $c="#800080">6388.2100</Value><Value $c="#800080">6269.4600</Value><Value $c="#0094ff">0.0000</Value>
            </LegendRow>
          </Legend>

          <Legend $top={463}>
            <LegendRow>
              <RowName $w={100}>TTM Squeeze (20)</RowName><Caret /><Minis source />
              <Value $c="#00f0ff">6.4674</Value><Value $c="#ff0000">0.0000</Value>
            </LegendRow>
          </Legend>

          <FloatBar $x={9} $y={562} role="toolbar" aria-label="Drawing properties">
            <Grip><GripDots /></Grip>
            {editTools.map(([n, g]) => <FloatButton key={n} aria-label={n}><Ico w={32}>{g}</Ico></FloatButton>)}
          </FloatBar>
          <FloatBar $x={4} $y={612} role="toolbar" aria-label="Favourite drawings">
            <Grip><GripDots /></Grip>
            {drawTools.map(([n, g]) => <FloatButton key={n} aria-label={n}><Ico w={32}>{g}</Ico></FloatButton>)}
          </FloatBar>
        </ChartCard>

        <TabStrip>
          <TabStub $w={135} /><TabStub $w={98} /><TabStub $w={101} /><TabStub $w={126} /><TabStub $w={128} /><TabStub />
        </TabStrip>
      </Page>
    </>
  );
}
